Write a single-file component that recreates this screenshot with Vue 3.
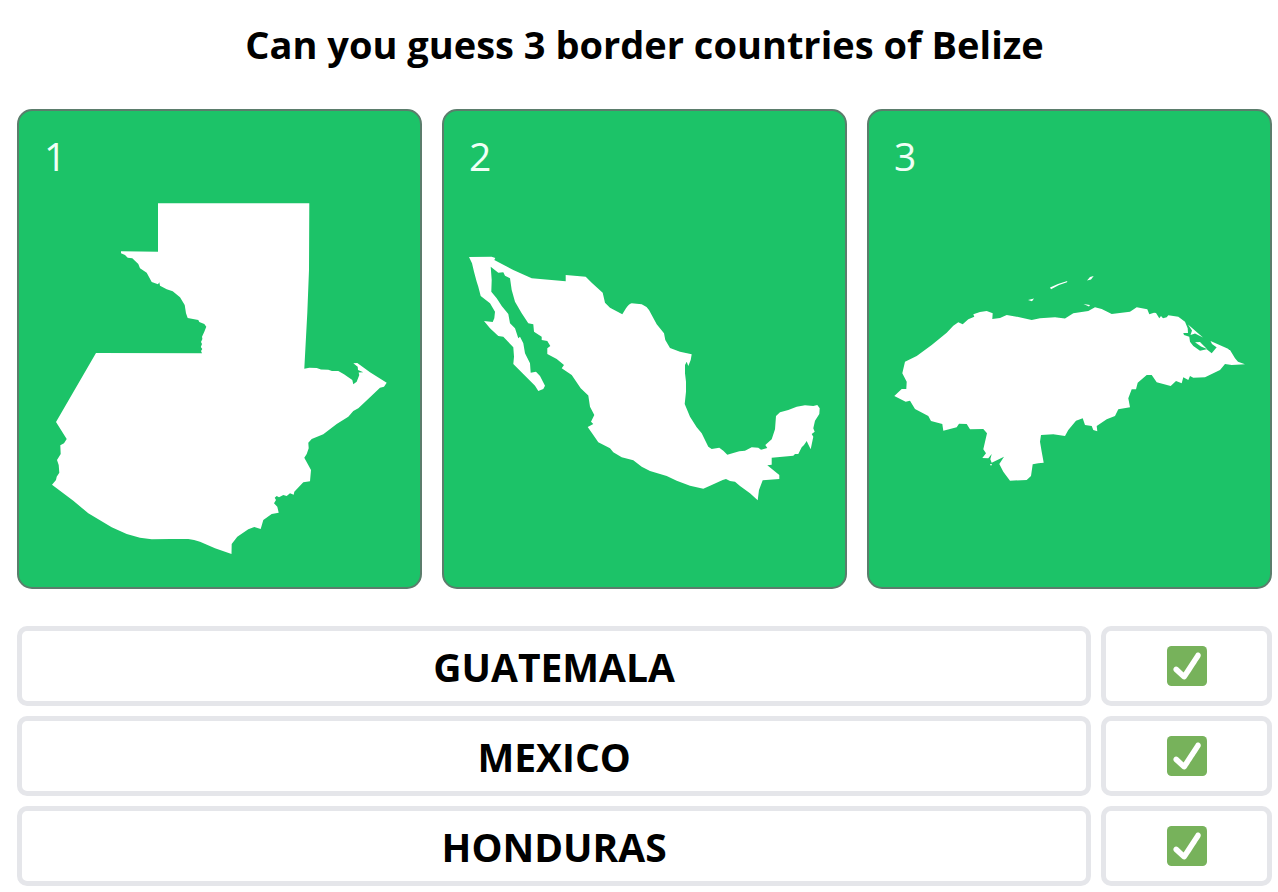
<script setup>
const countries = [
  {
    name: 'Guatemala',
    viewBox: '44 203 351 350',
    path: 'M158 203.3L309.3 203.3 309 270 307.3 313 304.3 368.7 309.3 367.7 316.7 368 321 369.4 328.3 369.7 332 371 338.3 371 344 374.3 352.3 380 353.3 384.3 356.7 381.7 359.3 375 358.6 372.6 363.3 372.3 358 370 357.7 366.7 353.3 363.3 357.3 363 370 372.3 386.7 382.7 384 386.7 380 387.7 370 397.3 358.3 408.3 353.3 411 348.3 416.7 336.7 424 323.3 434.3 311.7 439 308.3 442.7 308.7 448.3 306.7 454 304.3 457.7 311 470 310 481.3 303.3 482.3 294.3 491.7 293.7 494.7 290 493.3 286.7 496 283.3 495 279 497.3 276.7 496 274.7 497.7 276 500 274 503.3 277.3 506.7 278.7 512.7 271.7 514 263.3 520 260.7 529 254.3 527 248.3 529.3 237.3 536.7 231.7 544 231.5 554 215 548.3 200 541.7Q194 539.6 188.3 539L170 539 151.7 539.3 140 537.7 126.7 534 111.7 527.3 88.3 513.3 73.3 500.7 52 484.8 56 480 56.7 476.7 59.3 472.7 58.7 465 57 460 60.7 454 60.3 445.3 64 443.3 66.7 439 56 422 96 353 202 353.2 201 351 202.3 349 200.8 347 202 344 201 342 202.4 339 202 336.7 204.3 331.7 206.3 326.7 204.3 324 199.3 322 198.3 320 187.7 318 186 313.3 184.7 305 180 297.3 172.7 291.3 166.7 289.3 160 285.7 159.3 282.3 158 284.3 151.7 282 146.7 272.7 140 268.3 138.3 264 132.3 258.3 127.7 257.7 125 255 121 253.3 121 251.3 158 251.7Z',
  },
  {
    name: 'Mexico',
    viewBox: '469 203 351 350',
    path: 'M469 257L491.7 256.7 495.3 258 494.3 260 513.3 270 531.7 278.3 565.7 281.3 565.7 275 585.7 276.7 591.7 282.7 602.7 292.7 605 302.7 610 307.7 622.3 314.3 626 308.3Q629 303.6 631.7 303.3L641.7 304.3Q646 306 649 310L656.7 324.3 664 333.3 665.3 340 670 348 680 351.7 691.7 354.3 690.7 360 688.3 366 686.7 361.7 685 365 685 373.3 686 381.7 686 391.7 684.7 404 690 416.7 696.7 427.3 701.7 433.3 708.3 446.7 711.7 449 719.3 447.7 723.3 450.7 727.3 454.7 733.3 453 739.3 451.3 745 450.7 751.7 447.3 758.3 447.7 761 449.7 767.3 448 765.3 445 771.7 439.3 775 429.3 776 416 780 412.3 788.3 410 796.7 406.7 805 405.3 813.3 406 817.3 405 819.7 408.3 819.3 414 815 420.7 813.3 428.3 814.7 431.7 811.7 434 813.3 436.7 810.7 449.3 807.7 443.3 806.7 441 804 445 801.7 447.3 798.3 454 795 454 793.3 455.7 771.7 457.7 771.7 464.7 767.3 465.3 779.3 475 779.3 479 762.7 480.3 759 490 757.7 500.3 750 493.3 740 486 735 481.7 730 481 726 479 722.7 480 711.7 485 703.3 488.7 690 485.7 676.7 480.7 666.7 476 650 471 641.7 466.7 633.3 460.3 621.7 457.3 613.3 452.3 610 448.3 598.3 442.3 593.3 435 587.7 427 593.3 424 591 421.7 594.3 415 590 406.7 588.3 395.5 580.7 388.3 571.7 375 561.7 368.3 564 365 556.7 359 547.3 354 547.3 348.3 550.3 346 547.3 341 541.7 340 541.7 336.7 534 331.7 533.3 324.3 528.3 323.3 521.7 313.3 515 301.7 511.7 290 510 278.3 505 275.7 503.3 272.3 498.3 272.7 490.7 266.7 491.7 280 491.3 291.7 496.7 298.3 501.7 306 508.3 314 510 323.3 515 328.3 518.3 338.3 520 336.7 523.3 343.3 525 353.3 530 363.3 530.7 372.7 536 371.7 540 376 545 385.7 543.3 389 538.3 391 535 385.7 513.3 364 514 356.7 513.3 347.3 503.3 336.7 498.3 336 490 328.3 484 321 492.7 322 494.3 318.3 495 311.7 490 303.3 480.7 296 478.3 286.7 476.7 281.7 474 271.7 472 263.3Z',
  },
  {
    name: 'Honduras',
    viewBox: '894 203 351 350',
    path: 'M894.3 396L901.7 389 906.3 389 906.7 381.7 902.3 373.3 905 361.7 916.7 356 931.7 345 946.7 332.7 953.3 325.7 958.3 322.3 962.7 324.3 968.3 319.3 974.3 316.7 973.3 314.3 980 312 986.7 311 992.7 313.3 992.3 319 1000 318 1006.7 315 1018.3 317 1031.7 320 1040 318.3 1055 317.3 1065 318.5 1073.3 313.3 1088.3 311 1095 307.3 1101.7 309 1111.7 314 1130 311.7 1136.7 307.3 1147.3 309.3 1149.3 314.3 1154 312.7 1156 313 1159.3 318.3 1161 316 1163 318.3 1166.7 317.3 1168.3 315.3 1178.3 316.7 1185 321.7 1187.7 328.3 1188 333 1183.3 333 1184 335 1189.3 336.7 1190 341.7 1193.3 346 1200 350.7 1206.7 349.3 1211.7 353.3 1216.7 347.3 1230 350 1235 358.3 1238 361.7 1245 364.3 1231.7 365 1225 364 1220 370 1205 377.3 1193.3 377.7 1190 376 1188.3 380 1183.3 377.3 1181.7 383.3 1176 381 1170.7 386 1156.7 382.3 1151.7 375 1146.7 375 1137.7 382.7 1136 389.3 1131.7 389.3 1128.3 398.3 1130 407.3 1118.3 409.3 1115 416 1106.7 419.3 1096.7 426 1097.3 431.3 1093.3 430 1091.7 426 1085 425 1082.7 418.3 1076 420.7 1068.3 430 1065 436 1053.3 434.3 1041 435 1040 441.7 1041.7 451.7 1043.7 462.7 1038.3 463.3 1032.7 464.3 1031 476 1026.7 480 1010 480.7 1003.3 471.7 999.3 464 1004 456.7 991.7 462.7 990.3 459.3 991.7 454 988.3 458.3 982.3 458 986 453.3 983.3 449.3 987 433.3 983.3 429 970 429.3 966.7 424 959 423.7 956.7 427.3 943.3 430.7 942.3 424 931 421 928.3 416 915 409 910 400.7 905.7 401.7ZM1188 324.5L1203 337.5 1195 333.5 1190.5 335 1192 330.5ZM1195 342.3L1200 342 1207 349 1201 346.5ZM1210.5 341L1228 348.7 1230 350.7 1217.5 348 1212 344ZM1028 300L1034 298.5 1032 301.3ZM1050 287.5L1058 284 1067.3 281 1067 282.3 1059 285 1051 289.3ZM1087 280.5L1090 277 1093.7 276 1091 279.5ZM1083.5 304L1090 305 1089 306.5ZM990 464L992 464 991 466Z',
  },
]
</script>

<template>
  <main class="game">
    <h1 class="question">Can you guess 3 border countries of Belize</h1>

    <section class="cards" aria-label="Border countries">
      <article v-for="(country, index) in countries" :key="country.name" class="card">
        <span class="number">{{ index + 1 }}</span>
        <svg class="shape" :viewBox="country.viewBox" role="img" :aria-label="country.name">
          <path :d="country.path" fill="#fff" />
        </svg>
      </article>
    </section>

    <ul class="guesses">
      <li v-for="country in countries" :key="country.name" class="guess">
        <span class="cell answer">{{ country.name }}</span>
        <span class="cell result">
          <svg class="check" viewBox="0 0 36 36" role="img" aria-label="Correct">
            <rect width="36" height="36" rx="4" fill="#77b25b" />
            <path
              fill="#fff"
              d="M29.28 6.362c-1.156-.751-2.704-.422-3.458.736L14.936 23.877l-5.029-4.65c-1.014-.938-2.596-.875-3.533.138-.937 1.014-.875 2.596.139 3.533l7.209 6.666c.48.445 1.09.665 1.696.665.673 0 1.534-.282 2.099-1.139.332-.506 12.5-19.27 12.5-19.27.751-1.159.421-2.707-.737-3.458z"
            />
          </svg>
        </span>
      </li>
    </ul>
  </main>
</template>

<style>
body {
  margin: 0;
  background: #fff;
}
</style>

<style scoped>
.game {
  box-sizing: border-box;
  padding: 14px 6px 6px 17px;
  color: #000;
  font-family: 'Open Sans', 'Noto Sans', sans-serif;
  font-size: 39px;
  line-height: 60px;
}

.question {
  margin: 0 0 35px;
  font-size: 38px;
  font-weight: 700;
  text-align: center;
}

.cards {
  display: grid;
  grid-template-columns: repeat(3, minmax(0, 1fr));
  gap: 20px;
}

.card {
  display: flex;
  flex-direction: column;
  gap: 17px;
  padding: 15px 25px 34px;
  border: 2px solid #5b7d6c;
  border-radius: 15px;
  background: #1cc368;
}

.number {
  color: #f0fff6;
}

.shape {
  display: block;
  width: 100%;
  aspect-ratio: 351 / 350;
  overflow: visible;
}

.guesses {
  display: grid;
  gap: 10px;
  margin: 37px 0 0;
  padding: 0;
  list-style: none;
}

.guess {
  display: grid;
  grid-template-columns: repeat(7, minmax(0, 1fr));
  gap: 10px;
}

.cell {
  display: flex;
  align-items: center;
  justify-content: center;
  box-sizing: border-box;
  height: 80px;
  border: 5px solid #e5e6ea;
  border-radius: 10px;
}

.answer {
  grid-column: span 6;
  padding-top: 2px;
  font-weight: 700;
  text-transform: uppercase;
}

.check {
  width: 40px;
  height: 40px;
}
</style>
